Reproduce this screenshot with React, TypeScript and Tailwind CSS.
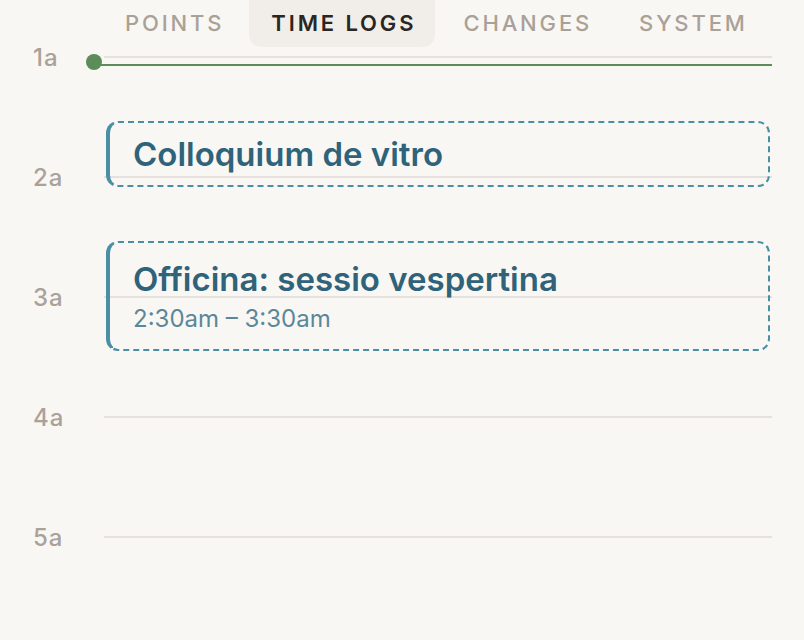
import React from "react";

const tabs = ["POINTS", "TIME LOGS", "CHANGES", "SYSTEM"];
const hours = ["1a", "2a", "3a", "4a", "5a"];

export default function App() {
  return (
    <div
      className="w-[804px] h-[640px] overflow-hidden bg-[#f9f7f4]"
      style={{ fontFamily: "Inter, 'Noto Sans', sans-serif" }}
    >
      <div className="flex h-[47px] items-stretch gap-[6px] pl-[103px]">
        {tabs.map((t) => (
          <div
            key={t}
            className={
              t === "TIME LOGS"
                ? "flex items-center rounded-b-[12px] bg-[#f1eeea] pl-[22px] pr-[19px] text-[22px] font-semibold tracking-[0.13em] text-[#2a2623]"
                : "flex items-center pl-[22px] pr-[19px] text-[22px] font-medium tracking-[0.13em] text-[#a9a198]"
            }
          >
            {t}
          </div>
        ))}
      </div>

      <div className="relative mt-[9px]">
        {hours.map((h) => (
          <div key={h} className="flex h-[120px]">
            <div className="-mt-[10px] w-[104px] pl-[33px] text-[24px] leading-[24px] font-medium tracking-[0.04em] text-[#aaa299]">
              {h}
            </div>
            <div className="mr-[32px] flex-1 border-t-2 border-[#e6e1dc]" />
          </div>
        ))}

        {/* now indicator */}
        <div className="absolute left-[86px] top-[-2px] h-[16px] w-[16px] rounded-full bg-[#5c8d58]" />
        <div className="absolute left-[94px] right-[32px] top-[8px] h-[2px] bg-[#5c8d58]" />

        {/* event 1 */}
        <div className="absolute left-[106px] right-[34px] top-[65px] flex h-[66px] items-center rounded-[12px] border-2 border-l-4 border-dashed border-[#4a8fa4] pl-[23px] [border-left-style:solid]">
          <div className="text-[33px] font-semibold leading-[40px] text-[#2e637a]">
            Colloquium de vitro
          </div>
        </div>

        {/* event 2 */}
        <div className="absolute left-[106px] right-[34px] top-[185px] h-[110px] rounded-[12px] border-2 border-l-4 border-dashed border-[#4a8fa4] pl-[23px] pt-[16px] [border-left-style:solid]">
          <div className="text-[33px] font-semibold leading-[40px] text-[#2e637a]">
            Officina: sessio vespertina
          </div>
          <div className="mt-[5px] text-[24px] leading-[30px] text-[#5b8799]">
            2:30am – 3:30am
          </div>
        </div>
      </div>
    </div>
  );
}
